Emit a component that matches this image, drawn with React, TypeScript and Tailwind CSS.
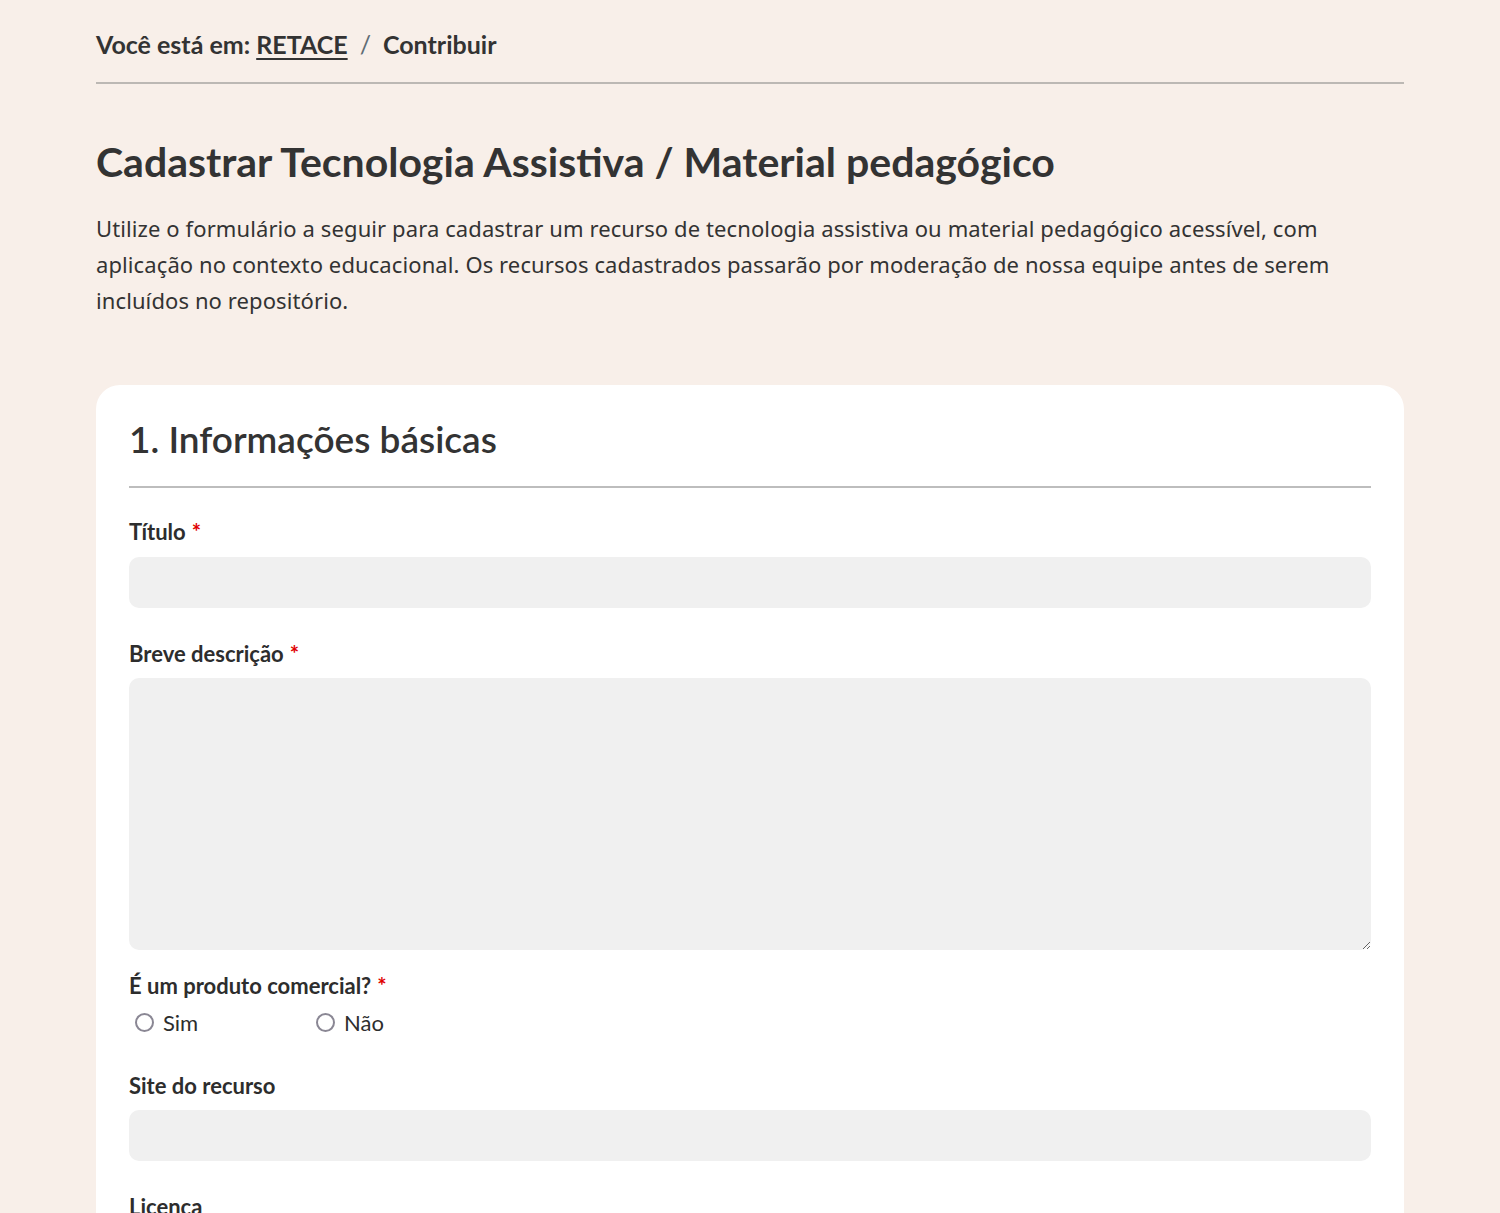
const heading = { fontFamily: 'Lato, "Noto Sans", sans-serif' };
const body = { fontFamily: '"Noto Sans", "Open Sans", sans-serif' };

const Required = () => <span className="text-[#e00000] ml-[6px] font-bold">*</span>;

const Label = ({ children, required }: { children: React.ReactNode; required?: boolean }) => (
  <label className="block text-[22px] font-bold leading-[28px] text-[#2d2d2d]" style={heading}>
    {children}
    {required && <Required />}
  </label>
);

const Radio = ({ label }: { label: string }) => (
  <label className="flex items-center gap-[9px] text-[22px] text-[#2d2d2d]" style={heading}>
    <span className="w-[19px] h-[19px] rounded-full border-2 border-[#8a8794] bg-white ml-[6px]" />
    {label}
  </label>
);

export default function App() {
  return (
    <div className="min-h-screen bg-[#f8efe9] text-[#333]">
      <div className="mx-[96px] pt-[28px]">
        <nav className="text-[25px] font-bold leading-[32px] pb-[22px] border-b-2 border-[#bcb8b4]" style={heading}>
          <span>Você está em: </span>
          <a className="underline underline-offset-4">RETACE</a>
          <span className="text-[#5f6c75] mx-[12px] font-normal">/</span>
          <span>Contribuir</span>
        </nav>

        <h1 className="mt-[52px] text-[41px] font-bold leading-[52px] text-[#333]" style={heading}>
          Cadastrar Tecnologia Assistiva / Material pedagógico
        </h1>
        <p className="mt-[22px] text-[22px] leading-[36px] text-[#333] max-w-[1260px] tracking-[0.1px]" style={body}>
          Utilize o formulário a seguir para cadastrar um recurso de tecnologia assistiva ou material pedagógico acessível, com
          aplicação no contexto educacional. Os recursos cadastrados passarão por moderação de nossa equipe antes de serem
          incluídos no repositório.
        </p>

        <section className="mt-[67px] bg-white rounded-[24px] px-[33px] pt-[29px] pb-10">
          <h2 className="text-[37px] font-semibold leading-[50px] pb-[22px] border-b-2 border-[#bdbdbd]" style={heading}>
            1. Informações básicas
          </h2>

          <div className="mt-[30px]">
            <Label required>Título</Label>
            <input className="mt-[11px] w-full h-[51px] rounded-[10px] bg-[#f0f0f0] outline-none" />
          </div>

          <div className="mt-[32px]">
            <Label required>Breve descrição</Label>
            <textarea className="mt-[10px] block w-full h-[272px] rounded-[10px] bg-[#f0f0f0] outline-none" />
          </div>

          <div className="mt-[22px]">
            <Label required>É um produto comercial?</Label>
            <div className="mt-[6px] flex">
              <div className="w-[181px]"><Radio label="Sim" /></div>
              <Radio label="Não" />
            </div>
          </div>

          <div className="mt-[33px]">
            <Label>Site do recurso</Label>
            <input className="mt-[10px] w-full h-[51px] rounded-[10px] bg-[#f0f0f0] outline-none" />
          </div>

          <div className="mt-[32px]">
            <Label>Licença</Label>
            <input className="mt-[10px] w-full h-[51px] rounded-[10px] bg-[#f0f0f0] outline-none" />
          </div>
        </section>
      </div>
    </div>
  );
}
